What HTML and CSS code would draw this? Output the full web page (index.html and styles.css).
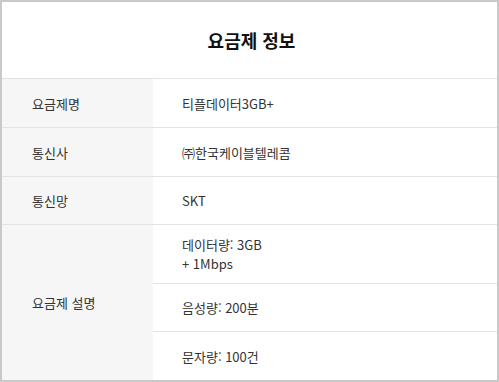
FILE: index.html
```html
<!DOCTYPE html>
<html lang="ko">
<head>
<meta charset="utf-8">
<link rel="stylesheet" href="styles.css">
</head>
<body>
<div class="frame">
  <div class="title">요금제 정보</div>
  <table class="info">
    <tr class="r1">
      <th>요금제명</th>
      <td>티플데이터3GB+</td>
    </tr>
    <tr class="r2">
      <th>통신사</th>
      <td>㈜한국케이블텔레콤</td>
    </tr>
    <tr class="r3">
      <th>통신망</th>
      <td>SKT</td>
    </tr>
    <tr class="s1">
      <th rowspan="3" class="last">요금제 설명</th>
      <td><span class="ln">데이터량: 3GB</span><span class="ln">+ 1Mbps</span></td>
    </tr>
    <tr class="s2">
      <td>음성량: 200분</td>
    </tr>
    <tr class="s3">
      <td class="last">문자량: 100건</td>
    </tr>
  </table>
</div>
</body>
</html>
```
FILE: styles.css
```css
html, body {
  margin: 0;
  padding: 0;
}
body {
  width: 499px;
  height: 382px;
  font-family: "Noto Sans CJK KR", "Noto Sans", sans-serif;
  color: #333;
}
.frame {
  box-sizing: border-box;
  width: 499px;
  height: 382px;
  border: 2px solid #c9c9c9;
  background: #fff;
}
.title {
  height: 76px;
  border-bottom: 1px solid #e3e3e3;
  display: flex;
  align-items: center;
  justify-content: center;
  padding-left: 4px;
  font-size: 18px;
  font-weight: 700;
  color: #111;
}
.info {
  width: 100%;
  border-collapse: collapse;
  font-size: 13px;
}
.info th, .info td {
  padding: 0;
  border-bottom: 1px solid #e3e3e3;
  text-align: left;
  vertical-align: middle;
  font-weight: 400;
  line-height: 17px;
}
.info th {
  width: 121px;
  padding-left: 30px;
  background: #f6f6f6;
  color: #333;
}
.info td {
  padding-left: 29px;
  color: #333;
}
.info .ln {
  display: block;
  height: 19px;
  line-height: 19px;
}
.info .last {
  border-bottom: none;
}
.r1 th, .r1 td { height: 48px; }
.r2 th, .r2 td { height: 48px; }
.r3 th, .r3 td { height: 47px; }
.s1 td { height: 58px; }
.s2 td { height: 47px; }
.s3 td { height: 48px; }
```
